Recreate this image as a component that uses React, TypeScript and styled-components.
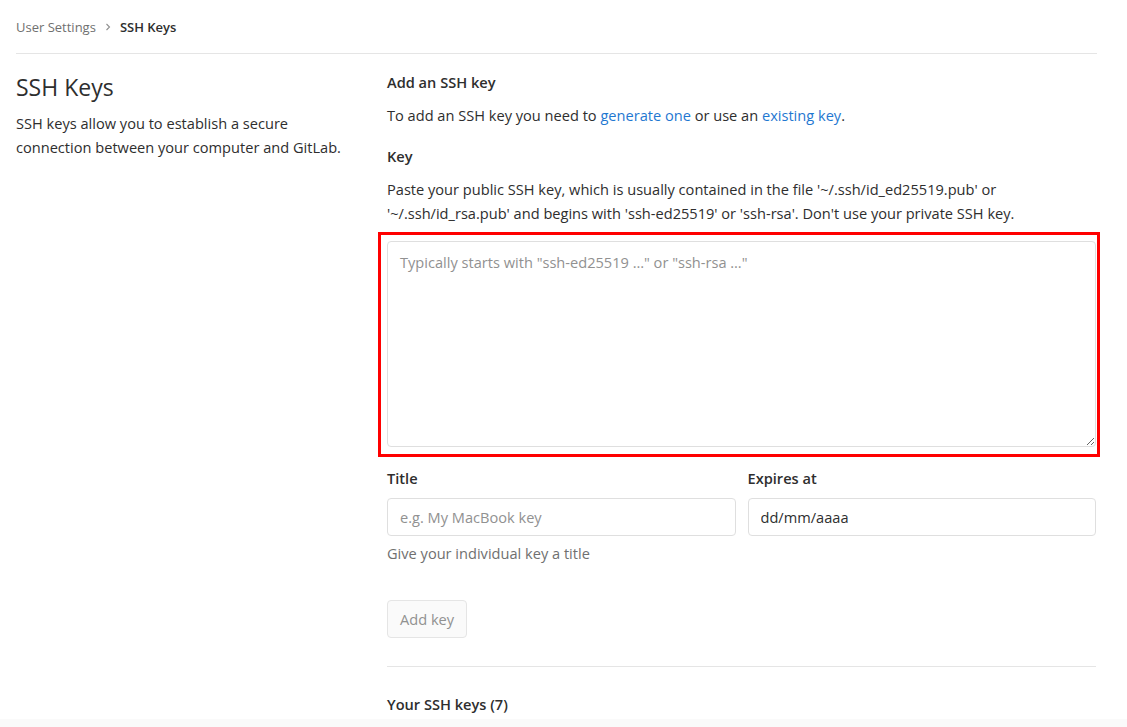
import React from "react";
import styled, { createGlobalStyle } from "styled-components";

const Global = createGlobalStyle`
  html, body { margin: 0; padding: 0; background: #fff; }
  body { font-family: "Open Sans", "Noto Sans", sans-serif; color: #2e2e2e; }
  * { box-sizing: border-box; }
`;

const Page = styled.div`
  width: 1127px;
  min-height: 727px;
  display: flex;
  flex-direction: column;
`;

const Container = styled.div`
  padding: 0 30px 0 16px;
  flex: 1;
`;

const Breadcrumb = styled.nav`
  height: 54px;
  display: flex;
  align-items: center;
  gap: 7px;
  font-size: 13px;
  border-bottom: 1px solid #e5e5e5;
  padding-bottom: 0;
`;

const Crumb = styled.span<{ $active?: boolean }>`
  color: ${(p) => (p.$active ? "#2e2e2e" : "#707070")};
  font-weight: ${(p) => (p.$active ? 600 : 400)};
`;

const Sep = styled.svg`
  width: 8px;
  height: 8px;
  margin: 0 1px;
`;

const Row = styled.div`
  display: grid;
  grid-template-columns: 341px minmax(0, 1fr);
  column-gap: 30px;
  padding-top: 17px;
`;

const Side = styled.div`
  padding-top: 0;
`;

const SideTitle = styled.h4`
  margin: 0 0 8px;
  font-size: 23px;
  font-weight: 400;
  color: #2e2e2e;
  line-height: 32px;
`;

const SideText = styled.p`
  margin: 0;
  font-size: 14.6px;
  line-height: 24px;
  color: #2e2e2e;
`;

const Main = styled.div`
  display: flex;
  flex-direction: column;
  padding-right: 1px;
`;

const H5 = styled.h5<{ $mt?: number }>`
  margin: ${(p) => p.$mt ?? 0}px 0 0;
  font-size: 14.6px;
  font-weight: 600;
  line-height: 20px;
  color: #2e2e2e;
`;

const Para = styled.p<{ $mt?: number }>`
  margin: ${(p) => p.$mt ?? 0}px 0 0;
  font-size: 14.6px;
  line-height: 24px;
  color: #2e2e2e;
`;

const Link = styled.a`
  color: #1f78d1;
  text-decoration: none;
`;

const Highlight = styled.div`
  margin: 7px -4px 0 -9px;
  border: 3px solid #ff0000;
  padding: 6px 1px 7px 6px;
`;

const TextArea = styled.textarea`
  display: block;
  width: 100%;
  height: 206px;
  border: 1px solid #dfdfdf;
  border-radius: 4px;
  padding: 10px 12px;
  font-family: inherit;
  font-size: 14.6px;
  color: #2e2e2e;
  resize: vertical;
  outline: none;
  &::placeholder { color: #919191; }
`;

const Fields = styled.div`
  display: grid;
  grid-template-columns: minmax(0, 1fr) minmax(0, 1fr);
  column-gap: 12px;
  margin-top: 11px;
`;

const Field = styled.div`
  display: flex;
  flex-direction: column;
`;

const Label = styled.label`
  font-size: 14.6px;
  font-weight: 600;
  color: #2e2e2e;
  line-height: 20px;
  margin-bottom: 10px;
`;

const Input = styled.input`
  height: 38px;
  border: 1px solid #dfdfdf;
  border-radius: 4px;
  padding: 0 12px;
  font-family: inherit;
  font-size: 14.6px;
  color: #2e2e2e;
  outline: none;
  &::placeholder { color: #919191; }
`;

const Help = styled.span`
  margin-top: 7px;
  font-size: 14.6px;
  line-height: 20px;
  color: #707070;
`;

const Button = styled.button`
  margin-top: 37px;
  align-self: flex-start;
  height: 38px;
  padding: 0 12px;
  border: 1px solid #e5e5e5;
  border-radius: 4px;
  background: #fafafa;
  color: #919191;
  font-family: inherit;
  font-size: 14.6px;
`;

const Hr = styled.hr`
  border: none;
  border-top: 1px solid #e5e5e5;
  margin: 28px 0 0 0;
`;

const Footer = styled.div`
  height: 9px;
  background: #fafafa;
  margin-top: 5px;
`;

export default function App() {
  return (
    <Page>
      <Global />
      <Container>
        <Breadcrumb>
          <Crumb>User Settings</Crumb>
          <Sep viewBox="0 0 8 8">
            <path d="M2.5 1 L5.5 4 L2.5 7" fill="none" stroke="#909090" strokeWidth="1.1" />
          </Sep>
          <Crumb $active>SSH Keys</Crumb>
        </Breadcrumb>
        <Row>
          <Side>
            <SideTitle>SSH Keys</SideTitle>
            <SideText>
              SSH keys allow you to establish a secure connection between your computer and GitLab.
            </SideText>
          </Side>
          <Main>
            <H5 $mt={1}>Add an SSH key</H5>
            <Para $mt={11}>
              To add an SSH key you need to <Link href="#">generate one</Link> or use an{" "}
              <Link href="#">existing key</Link>.
            </Para>
            <H5 $mt={19}>Key</H5>
            <Para $mt={11}>
              Paste your public SSH key, which is usually contained in the file '~/.ssh/id_ed25519.pub' or
              '~/.ssh/id_rsa.pub' and begins with 'ssh-ed25519' or 'ssh-rsa'. Don't use your private SSH key.
            </Para>
            <Highlight>
              <TextArea placeholder={'Typically starts with "ssh-ed25519 …" or "ssh-rsa …"'} />
            </Highlight>
            <Fields>
              <Field>
                <Label>Title</Label>
                <Input placeholder="e.g. My MacBook key" />
                <Help>Give your individual key a title</Help>
              </Field>
              <Field>
                <Label>Expires at</Label>
                <Input defaultValue="dd/mm/aaaa" />
              </Field>
            </Fields>
            <Button>Add key</Button>
            <Hr />
            <H5 $mt={27}>Your SSH keys (7)</H5>
          </Main>
        </Row>
      </Container>
      <Footer />
    </Page>
  );
}
